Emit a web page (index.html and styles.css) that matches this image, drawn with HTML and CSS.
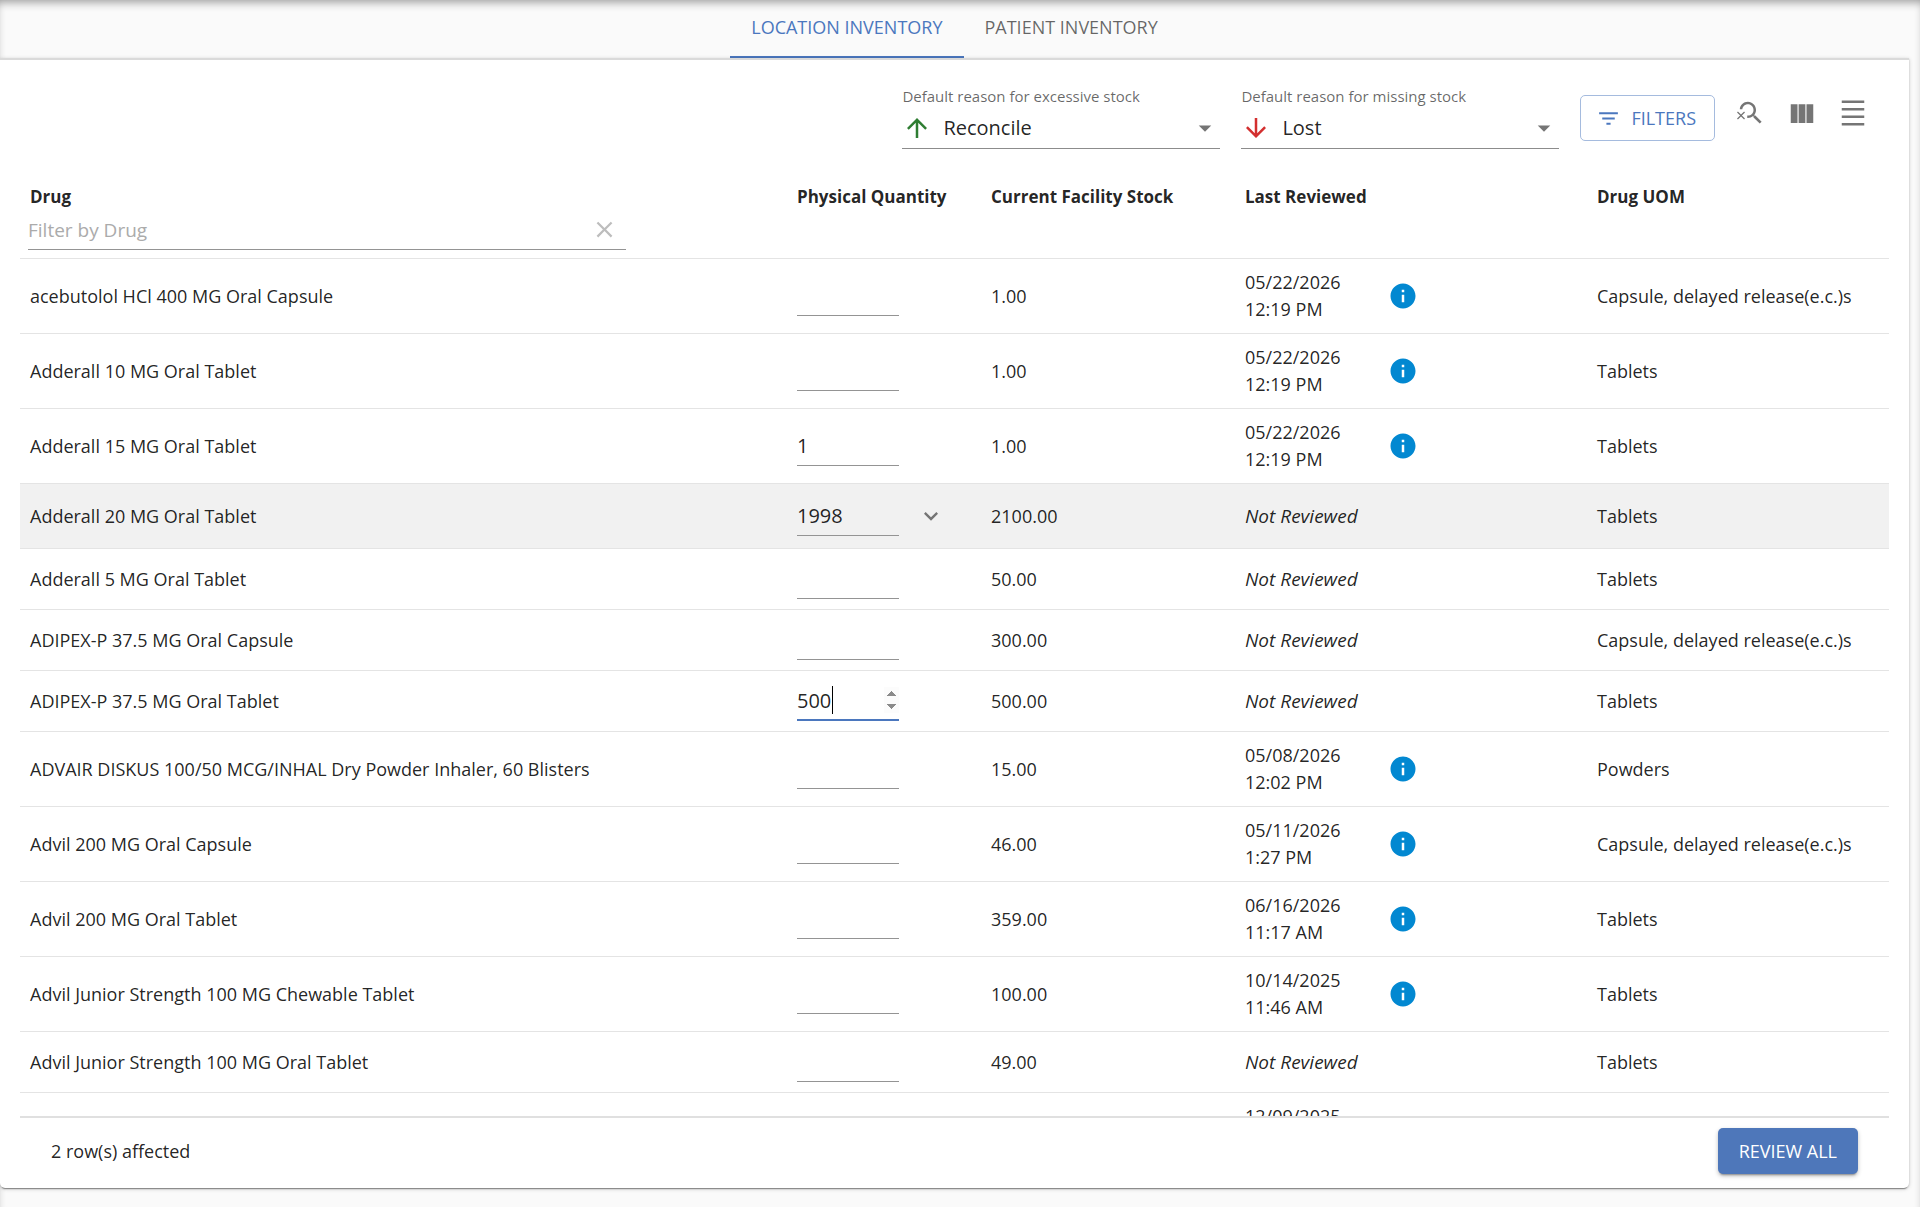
FILE: index.html
```html
<!DOCTYPE html>
<html lang="en">
<head>
    <meta charset="UTF-8">
    <meta name="viewport" content="width=device-width, initial-scale=1.0">
    <title>Location Inventory</title>
    <link rel="stylesheet" href="styles.css">
</head>
<body>
    <svg class="sprite" aria-hidden="true">
        <symbol id="info" viewBox="0 0 24 24"><path d="M12 2C6.48 2 2 6.48 2 12s4.48 10 10 10 10-4.48 10-10S17.52 2 12 2zm1 15h-2v-6h2v6zm0-8h-2V7h2v2z"/></symbol>
    </svg>

    <nav class="tabs">
        <button type="button" class="tab active">LOCATION INVENTORY</button>
        <button type="button" class="tab">PATIENT INVENTORY</button>
    </nav>

    <main class="card">
        <div class="toolbar">
            <div class="field">
                <label for="excessReason">Default reason for excessive stock</label>
                <div class="select-box">
                    <svg class="arrow up" viewBox="0 0 24 24"><path d="M4 12l1.41 1.41L11 7.83V20h2V7.83l5.58 5.59L20 12l-8-8-8 8z"/></svg>
                    <select id="excessReason">
                        <option>Reconcile</option>
                    </select>
                    <svg class="caret" viewBox="0 0 24 24"><path d="M7 10l5 5 5-5z"/></svg>
                </div>
            </div>
            <div class="field">
                <label for="missingReason">Default reason for missing stock</label>
                <div class="select-box">
                    <svg class="arrow down" viewBox="0 0 24 24"><path d="M20 12l-1.41-1.41L13 16.17V4h-2v12.17l-5.58-5.59L4 12l8 8 8-8z"/></svg>
                    <select id="missingReason">
                        <option>Lost</option>
                    </select>
                    <svg class="caret" viewBox="0 0 24 24"><path d="M7 10l5 5 5-5z"/></svg>
                </div>
            </div>
            <button type="button" class="filters">
                <svg viewBox="0 0 24 24"><path d="M10 18h4v-2h-4v2zM3 6v2h18V6H3zm3 7h12v-2H6v2z"/></svg>
                FILTERS
            </button>
            <div class="tools">
                <button type="button" class="icon-button" aria-label="Hide search">
                    <svg viewBox="0 0 24 24"><path d="M15.5 14h-.79l-.28-.27C15.41 12.59 16 11.11 16 9.5 16 5.91 13.09 3 9.5 3 6.08 3 3.28 5.64 3.03 9h2.02C5.3 6.75 7.18 5 9.5 5 11.99 5 14 7.01 14 9.5S11.99 14 9.5 14c-.17 0-.33-.03-.5-.05v2.02c.17.02.33.03.5.03 1.61 0 3.09-.59 4.23-1.57l.27.28v.79l5 4.99L20.49 19l-4.99-5z"/><path d="M6.47 10.82L4 13.29l-2.47-2.47-.71.71L3.29 14 .82 16.47l.71.71L4 14.71l2.47 2.47.71-.71L4.71 14l2.47-2.47z"/></svg>
                </button>
                <button type="button" class="icon-button" aria-label="Show columns">
                    <svg viewBox="0 0 24 24"><path d="M3 5h5.4v15H3zM9.3 5h5.4v15H9.3zM15.6 5H21v15h-5.400z"/></svg>
                </button>
                <button type="button" class="icon-button" aria-label="Toggle density">
                    <svg viewBox="0 0 24 24"><path d="M3 2h18v2H3zM3 8h18v2H3zM3 14h18v2H3zM3 20h18v2H3z"/></svg>
                </button>
            </div>
        </div>

        <div class="table-wrap">
            <table>
                <colgroup>
                    <col>
                    <col class="col-quantity">
                    <col class="col-stock">
                    <col class="col-reviewed">
                    <col class="col-uom">
                </colgroup>
                <thead>
                    <tr>
                        <th>Drug
                            <div class="drug-filter">
                                <input type="text" placeholder="Filter by Drug" aria-label="Filter by Drug">
                                <button type="button" class="clear" aria-label="Clear filter">
                                    <svg viewBox="0 0 24 24"><path d="M19 6.410L17.59 5 12 10.590 6.410 5 5 6.410 10.590 12 5 17.590 6.410 19 12 13.410 17.590 19 19 17.590 13.410 12z"/></svg>
                                </button>
                            </div>
                        </th>
                        <th>Physical Quantity</th>
                        <th>Current Facility Stock</th>
                        <th>Last Reviewed</th>
                        <th>Drug UOM</th>
                    </tr>
                </thead>
                <tbody>
                    <tr>
                        <td>acebutolol HCl 400 MG Oral Capsule</td>
                        <td><input type="number" class="quantity" aria-label="Physical quantity"></td>
                        <td>1.00</td>
                        <td><div class="reviewed"><span>05/22/2026<br>12:19 PM</span><svg><use href="#info"/></svg></div></td>
                        <td>Capsule, delayed release(e.c.)s</td>
                    </tr>
                    <tr>
                        <td>Adderall 10 MG Oral Tablet</td>
                        <td><input type="number" class="quantity" aria-label="Physical quantity"></td>
                        <td>1.00</td>
                        <td><div class="reviewed"><span>05/22/2026<br>12:19 PM</span><svg><use href="#info"/></svg></div></td>
                        <td>Tablets</td>
                    </tr>
                    <tr>
                        <td>Adderall 15 MG Oral Tablet</td>
                        <td><input type="number" class="quantity" value="1" aria-label="Physical quantity"></td>
                        <td>1.00</td>
                        <td><div class="reviewed"><span>05/22/2026<br>12:19 PM</span><svg><use href="#info"/></svg></div></td>
                        <td>Tablets</td>
                    </tr>
                    <tr class="changed">
                        <td>Adderall 20 MG Oral Tablet</td>
                        <td>
                            <div class="quantity-box">
                                <input type="number" class="quantity" value="1998" aria-label="Physical quantity">
                                <button type="button" class="expand" aria-label="Show reason">
                                    <svg viewBox="0 0 24 24"><path d="M16.590 8.590L12 13.170 7.410 8.590 6 10l6 6 6-6z"/></svg>
                                </button>
                            </div>
                        </td>
                        <td>2100.00</td>
                        <td><em>Not Reviewed</em></td>
                        <td>Tablets</td>
                    </tr>
                    <tr>
                        <td>Adderall 5 MG Oral Tablet</td>
                        <td><input type="number" class="quantity" aria-label="Physical quantity"></td>
                        <td>50.00</td>
                        <td><em>Not Reviewed</em></td>
                        <td>Tablets</td>
                    </tr>
                    <tr>
                        <td>ADIPEX-P 37.5 MG Oral Capsule</td>
                        <td><input type="number" class="quantity" aria-label="Physical quantity"></td>
                        <td>300.00</td>
                        <td><em>Not Reviewed</em></td>
                        <td>Capsule, delayed release(e.c.)s</td>
                    </tr>
                    <tr>
                        <td>ADIPEX-P 37.5 MG Oral Tablet</td>
                        <td>
                            <div class="quantity-box">
                                <input type="number" class="quantity editing" value="500" aria-label="Physical quantity" autofocus>
                                <span class="cursor"></span>
                            </div>
                        </td>
                        <td>500.00</td>
                        <td><em>Not Reviewed</em></td>
                        <td>Tablets</td>
                    </tr>
                    <tr>
                        <td>ADVAIR DISKUS 100/50 MCG/INHAL Dry Powder Inhaler, 60 Blisters</td>
                        <td><input type="number" class="quantity" aria-label="Physical quantity"></td>
                        <td>15.00</td>
                        <td><div class="reviewed"><span>05/08/2026<br>12:02 PM</span><svg><use href="#info"/></svg></div></td>
                        <td>Powders</td>
                    </tr>
                    <tr>
                        <td>Advil 200 MG Oral Capsule</td>
                        <td><input type="number" class="quantity" aria-label="Physical quantity"></td>
                        <td>46.00</td>
                        <td><div class="reviewed"><span>05/11/2026<br>1:27 PM</span><svg><use href="#info"/></svg></div></td>
                        <td>Capsule, delayed release(e.c.)s</td>
                    </tr>
                    <tr>
                        <td>Advil 200 MG Oral Tablet</td>
                        <td><input type="number" class="quantity" aria-label="Physical quantity"></td>
                        <td>359.00</td>
                        <td><div class="reviewed"><span>06/16/2026<br>11:17 AM</span><svg><use href="#info"/></svg></div></td>
                        <td>Tablets</td>
                    </tr>
                    <tr>
                        <td>Advil Junior Strength 100 MG Chewable Tablet</td>
                        <td><input type="number" class="quantity" aria-label="Physical quantity"></td>
                        <td>100.00</td>
                        <td><div class="reviewed"><span>10/14/2025<br>11:46 AM</span><svg><use href="#info"/></svg></div></td>
                        <td>Tablets</td>
                    </tr>
                    <tr>
                        <td>Advil Junior Strength 100 MG Oral Tablet</td>
                        <td><input type="number" class="quantity" aria-label="Physical quantity"></td>
                        <td>49.00</td>
                        <td><em>Not Reviewed</em></td>
                        <td>Tablets</td>
                    </tr>
                    <tr>
                        <td></td>
                        <td></td>
                        <td></td>
                        <td><div class="reviewed"><span>12/09/2025<br>&nbsp;</span></div></td>
                        <td></td>
                    </tr>
                </tbody>
            </table>
        </div>

        <footer class="footer">
            <span>2 row(s) affected</span>
            <button type="button" class="review">REVIEW ALL</button>
        </footer>
    </main>
</body>
</html>
```
FILE: styles.css
```css
* {
    box-sizing: border-box;
}

body {
    margin: 0;
    padding: 0 11px 19px 0;
    height: 100vh;
    display: flex;
    flex-direction: column;
    background-color: #fafafa;
    box-shadow: inset 0 6px 10px -4px rgba(0, 0, 0, 0.4);
    font-family: "Open Sans", sans-serif;
    font-size: 18px;
    line-height: 27px;
    color: rgba(0, 0, 0, 0.87);
    overflow: hidden;
}

button, input, select {
    font-family: inherit;
    font-size: inherit;
    color: inherit;
}

button {
    padding: 0;
    border: none;
    background: none;
    cursor: pointer;
}

svg {
    fill: currentColor;
    flex-shrink: 0;
}

.sprite {
    display: none;
}

.tabs {
    display: flex;
    justify-content: center;
}

.tab {
    height: 58px;
    padding: 0 21px 2px;
    color: rgba(0, 0, 0, 0.6);
    border-bottom: 2px solid transparent;
}

.tab.active {
    color: #4b77be;
    border-bottom-color: #4b77be;
}

.card {
    flex: 1;
    min-height: 0;
    display: flex;
    flex-direction: column;
    padding: 0 20px;
    background-color: #fff;
    border-top: 2px solid #dadada;
    border-radius: 0 0 5px 5px;
    box-shadow: 0 3px 1px -2px rgba(0, 0, 0, 0.3), 0 1px 2px rgba(0, 0, 0, 0.2), 0 1px 4px rgba(0, 0, 0, 0.16);
}

/* toolbar */
.toolbar {
    display: flex;
    justify-content: flex-end;
    align-items: flex-start;
    gap: 21px;
    padding: 24px 21px 28px 0;
}

.field {
    width: 318px;
}

.field label {
    display: block;
    font-size: 15px;
    line-height: 24px;
    color: rgba(0, 0, 0, 0.6);
}

.select-box {
    display: flex;
    align-items: center;
    height: 41px;
    border-bottom: 1px solid #8c8c8c;
}

.select-box select {
    flex: 1;
    margin-left: 11px;
    padding: 0 0 2px;
    border: none;
    outline: none;
    appearance: none;
    background: none;
    font-size: 20px;
}

.arrow {
    width: 30px;
    height: 30px;
}

.up {
    color: #2e7d32;
}

.down {
    color: #d32f2f;
}

.caret {
    width: 30px;
    height: 30px;
    color: #757575;
}

.filters {
    display: flex;
    align-items: center;
    gap: 10px;
    height: 46px;
    margin-top: 11px;
    padding: 0 18px 0 15px;
    color: #4b77be;
    border: 1px solid #a5bbde;
    border-radius: 5px;
}

.filters svg {
    width: 25px;
    height: 25px;
}

.tools {
    display: flex;
    gap: 21px;
    margin-top: 14px;
}

.icon-button {
    height: 30px;
    color: #757575;
}

.icon-button svg {
    display: block;
    width: 30px;
    height: 30px;
}

/* table */
.table-wrap {
    flex: 1;
    min-height: 0;
    overflow-y: auto;
    scrollbar-width: none;
}

table {
    width: 100%;
    table-layout: fixed;
    border-collapse: separate;
    border-spacing: 0;
}

.col-quantity {
    width: 194px;
}

.col-stock {
    width: 254px;
}

.col-reviewed {
    width: 352px;
}

.col-uom {
    width: 302px;
}

th, td {
    padding: 10px;
    text-align: left;
    border-bottom: 1px solid #e4e4e4;
}

th {
    padding: 6px 10px 8px;
    font-size: 17px;
    font-weight: 700;
    vertical-align: top;
}

td:first-child {
    font-weight: 500;
}

td em {
    font-size: 19px;
}

.changed td {
    background-color: #f1f1f1;
}

.drug-filter {
    display: flex;
    align-items: center;
    width: 80%;
    height: 40px;
    margin-left: -2px;
    border-bottom: 1px solid #949494;
}

.drug-filter input {
    flex: 1;
    min-width: 0;
    padding: 0;
    border: none;
    outline: none;
    background: none;
    font-size: 19px;
}

.drug-filter input::placeholder {
    color: #ababab;
}

.clear {
    margin-right: 8px;
    color: #bdbdbd;
}

.clear svg {
    display: block;
    width: 27px;
    height: 27px;
}

.quantity-box {
    position: relative;
    display: flex;
    align-items: center;
    gap: 10px;
}

.quantity {
    display: block;
    width: 102px;
    height: 40px;
    padding: 0;
    border: none;
    border-bottom: 1px solid #949494;
    outline: none;
    background: none;
    font-size: 20px;
}

.quantity.editing {
    border-bottom: 2px solid #4b77be;
    caret-color: transparent;
}

.editing::-webkit-inner-spin-button {
    opacity: 1;
    background-color: #f1f1f1;
}

/* text cursor of the cell being edited */
.cursor {
    position: absolute;
    left: 35px;
    top: 5px;
    width: 1px;
    height: 28px;
    background-color: #000;
}

.expand {
    width: 44px;
    height: 44px;
    color: #757575;
}

.expand svg {
    display: block;
    width: 28px;
    height: 28px;
    margin: 0 auto;
}

.reviewed {
    display: flex;
    align-items: center;
}

.reviewed span {
    width: 143px;
}

.reviewed svg {
    width: 30px;
    height: 30px;
    color: #0288d1;
}

/* footer */
.footer {
    display: flex;
    justify-content: space-between;
    align-items: center;
    height: 72px;
    padding: 0 31px 4px;
    border-top: 2px solid #e0e0e0;
}

.review {
    height: 46px;
    padding: 0 21px;
    color: #fff;
    background-color: #4e77ba;
    border-radius: 5px;
    box-shadow: 0 3px 2px -2px rgba(0, 0, 0, 0.3), 0 2px 4px rgba(0, 0, 0, 0.25);
}
```
